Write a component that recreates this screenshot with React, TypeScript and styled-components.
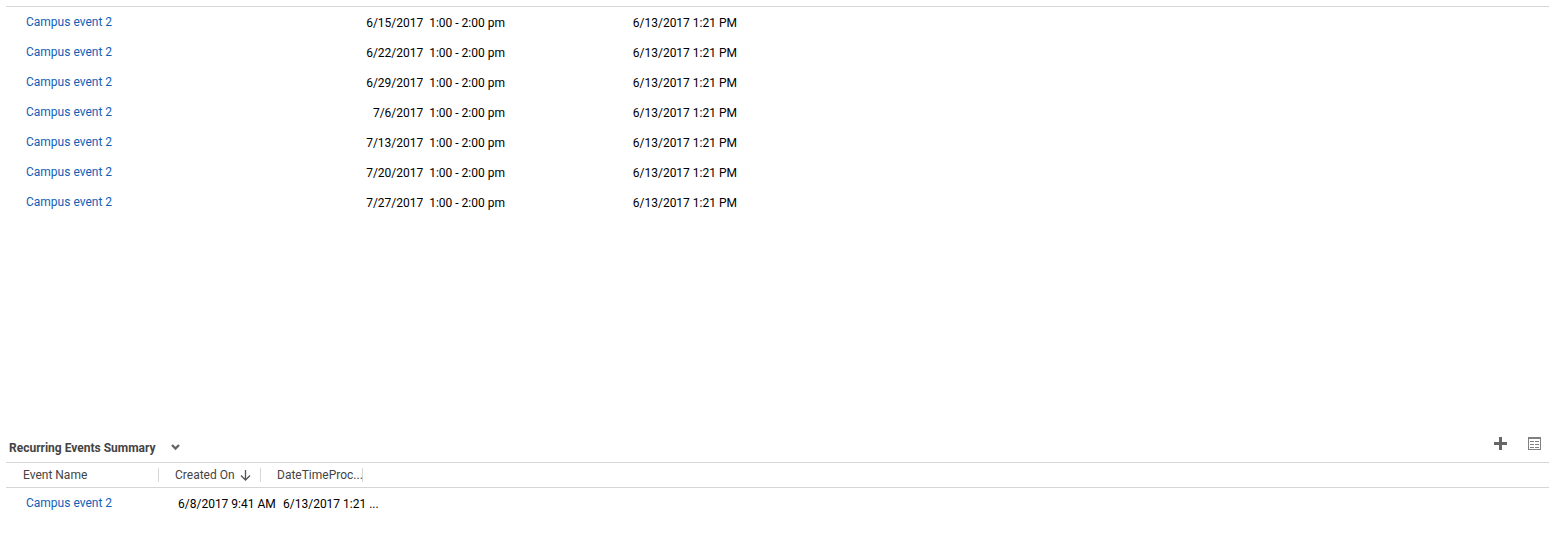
import React from "react";
import styled, { createGlobalStyle } from "styled-components";

const GlobalStyle = createGlobalStyle`
  *, *::before, *::after { box-sizing: border-box; }
  body {
    margin: 0;
    background: #ffffff;
    color: #000000;
    font-family: "Segoe UI", Roboto, "Open Sans", sans-serif;
    font-size: 12px;
    line-height: 16px;
  }
`;

const Page = styled.main`
  padding: 6px 7px 20px 6px;
`;

const EventsPanel = styled.section`
  min-height: 427px;
  border-top: 1px solid #d6d6d6;
`;

const Grid = styled.table`
  width: 100%;
  table-layout: fixed;
  border-spacing: 0;
`;

const Col = styled.col<{ $width?: number }>`
  width: ${({ $width }) => ($width ? `${$width}px` : "auto")};
`;

const Row = styled.tr`
  height: 30px;
`;

const Cell = styled.td<{ $indent?: number; $align?: "left" | "right" }>`
  padding: 2px 0 0 ${({ $indent = 0 }) => $indent}px;
  text-align: ${({ $align = "left" }) => $align};
  white-space: pre;
`;

const NameCell = styled(Cell)`
  padding: 0 0 0 20px;
`;

const RecordLink = styled.a`
  color: #1160b7;
  text-decoration: none;
  &:hover { text-decoration: underline; }
`;

const PanelHeader = styled.header`
  display: flex;
  align-items: center;
  justify-content: space-between;
  height: 30px;
  padding: 0 8px 0 3px;
  border-bottom: 1px solid #d6d6d6;
`;

const Title = styled.h2`
  margin: 0;
  color: #444444;
  font-size: 12px;
  font-weight: 700;
`;

const TitleGroup = styled.div`
  display: flex;
  align-items: center;
  gap: 15px;
`;

const Actions = styled.div`
  display: flex;
  gap: 21px;
  padding-bottom: 8px;
`;

const IconButton = styled.button`
  display: flex;
  padding: 0;
  border: 0;
  background: none;
  color: #666666;
  cursor: pointer;
`;

const HeadCell = styled.th`
  height: 25px;
  padding: 0;
  border-bottom: 1px solid #d6d6d6;
  color: #444444;
  font-weight: 400;
  text-align: left;
`;

const HeadLabel = styled.div<{ $indent: number }>`
  display: flex;
  align-items: center;
  gap: 5px;
  height: 14px;
  padding-left: ${({ $indent }) => $indent}px;
  border-right: 1px solid #d6d6d6;
  white-space: nowrap;
`;

const dates = [
  "6/15/2017",
  "6/22/2017",
  "6/29/2017",
  "7/6/2017",
  "7/13/2017",
  "7/20/2017",
  "7/27/2017",
];

const ChevronIcon = () => (
  <svg width="9" height="7" viewBox="0 0 9 7" aria-hidden="true">
    <path d="M1 1 4.5 4.5 8 1" fill="none" stroke="currentColor" strokeWidth="2.4" />
  </svg>
);

const SortIcon = () => (
  <svg width="11" height="11" viewBox="0 0 11 11" aria-label="Sorted descending">
    <path d="M5.5 0v10M1 5.5l4.5 4.5L10 5.5" fill="none" stroke="#555555" strokeWidth="1.3" />
  </svg>
);

const PlusIcon = () => (
  <svg width="13" height="13" viewBox="0 0 13 13" aria-hidden="true">
    <path d="M5 0h3v5h5v3H8v5H5V8H0V5h5z" fill="currentColor" />
  </svg>
);

const ListIcon = () => (
  <svg width="13" height="13" viewBox="0 0 13 13" shapeRendering="crispEdges" aria-hidden="true">
    <path d="M0 0h13v13H0zM1 2v10h11V2z" fill="#808080" fillRule="evenodd" />
    <path d="M2 4h4v1H2zM7 4h4v1H7zM2 7h4v1H2zM7 7h4v1H7zM2 10h4v1H2zM7 10h4v1H7z" fill="#808080" />
  </svg>
);

export default function App() {
  return (
    <Page>
      <GlobalStyle />
      <EventsPanel aria-label="Recurring events">
        <Grid>
          <colgroup>
            <Col $width={260} />
            <Col $width={239} />
            <Col $width={232} />
            <Col />
          </colgroup>
          <tbody>
            {dates.map((date) => (
              <Row key={date}>
                <NameCell>
                  <RecordLink href="#event">Campus event 2</RecordLink>
                </NameCell>
                <Cell $align="right">{`${date}  1:00 - 2:00 pm`}</Cell>
                <Cell $align="right">6/13/2017 1:21 PM</Cell>
                <Cell />
              </Row>
            ))}
          </tbody>
        </Grid>
      </EventsPanel>
      <section aria-labelledby="summary-title">
        <PanelHeader>
          <TitleGroup>
            <Title id="summary-title">Recurring Events Summary</Title>
            <IconButton type="button" aria-label="Choose view">
              <ChevronIcon />
            </IconButton>
          </TitleGroup>
          <Actions>
            <IconButton type="button" aria-label="Add record">
              <PlusIcon />
            </IconButton>
            <IconButton type="button" aria-label="Open list">
              <ListIcon />
            </IconButton>
          </Actions>
        </PanelHeader>
        <Grid>
          <colgroup>
            <Col $width={153} />
            <Col $width={102} />
            <Col $width={102} />
            <Col />
          </colgroup>
          <thead>
            <tr>
              <HeadCell scope="col">
                <HeadLabel $indent={17}>Event Name</HeadLabel>
              </HeadCell>
              <HeadCell scope="col">
                <HeadLabel $indent={16}>
                  Created On
                  <SortIcon />
                </HeadLabel>
              </HeadCell>
              <HeadCell scope="col">
                <HeadLabel $indent={16}>DateTimeProc...</HeadLabel>
              </HeadCell>
              <HeadCell as="td" />
            </tr>
          </thead>
          <tbody>
            <Row>
              <NameCell>
                <RecordLink href="#event">Campus event 2</RecordLink>
              </NameCell>
              <Cell $indent={19}>6/8/2017 9:41 AM</Cell>
              <Cell $indent={22}>6/13/2017 1:21 ...</Cell>
              <Cell />
            </Row>
          </tbody>
        </Grid>
      </section>
    </Page>
  );
}
